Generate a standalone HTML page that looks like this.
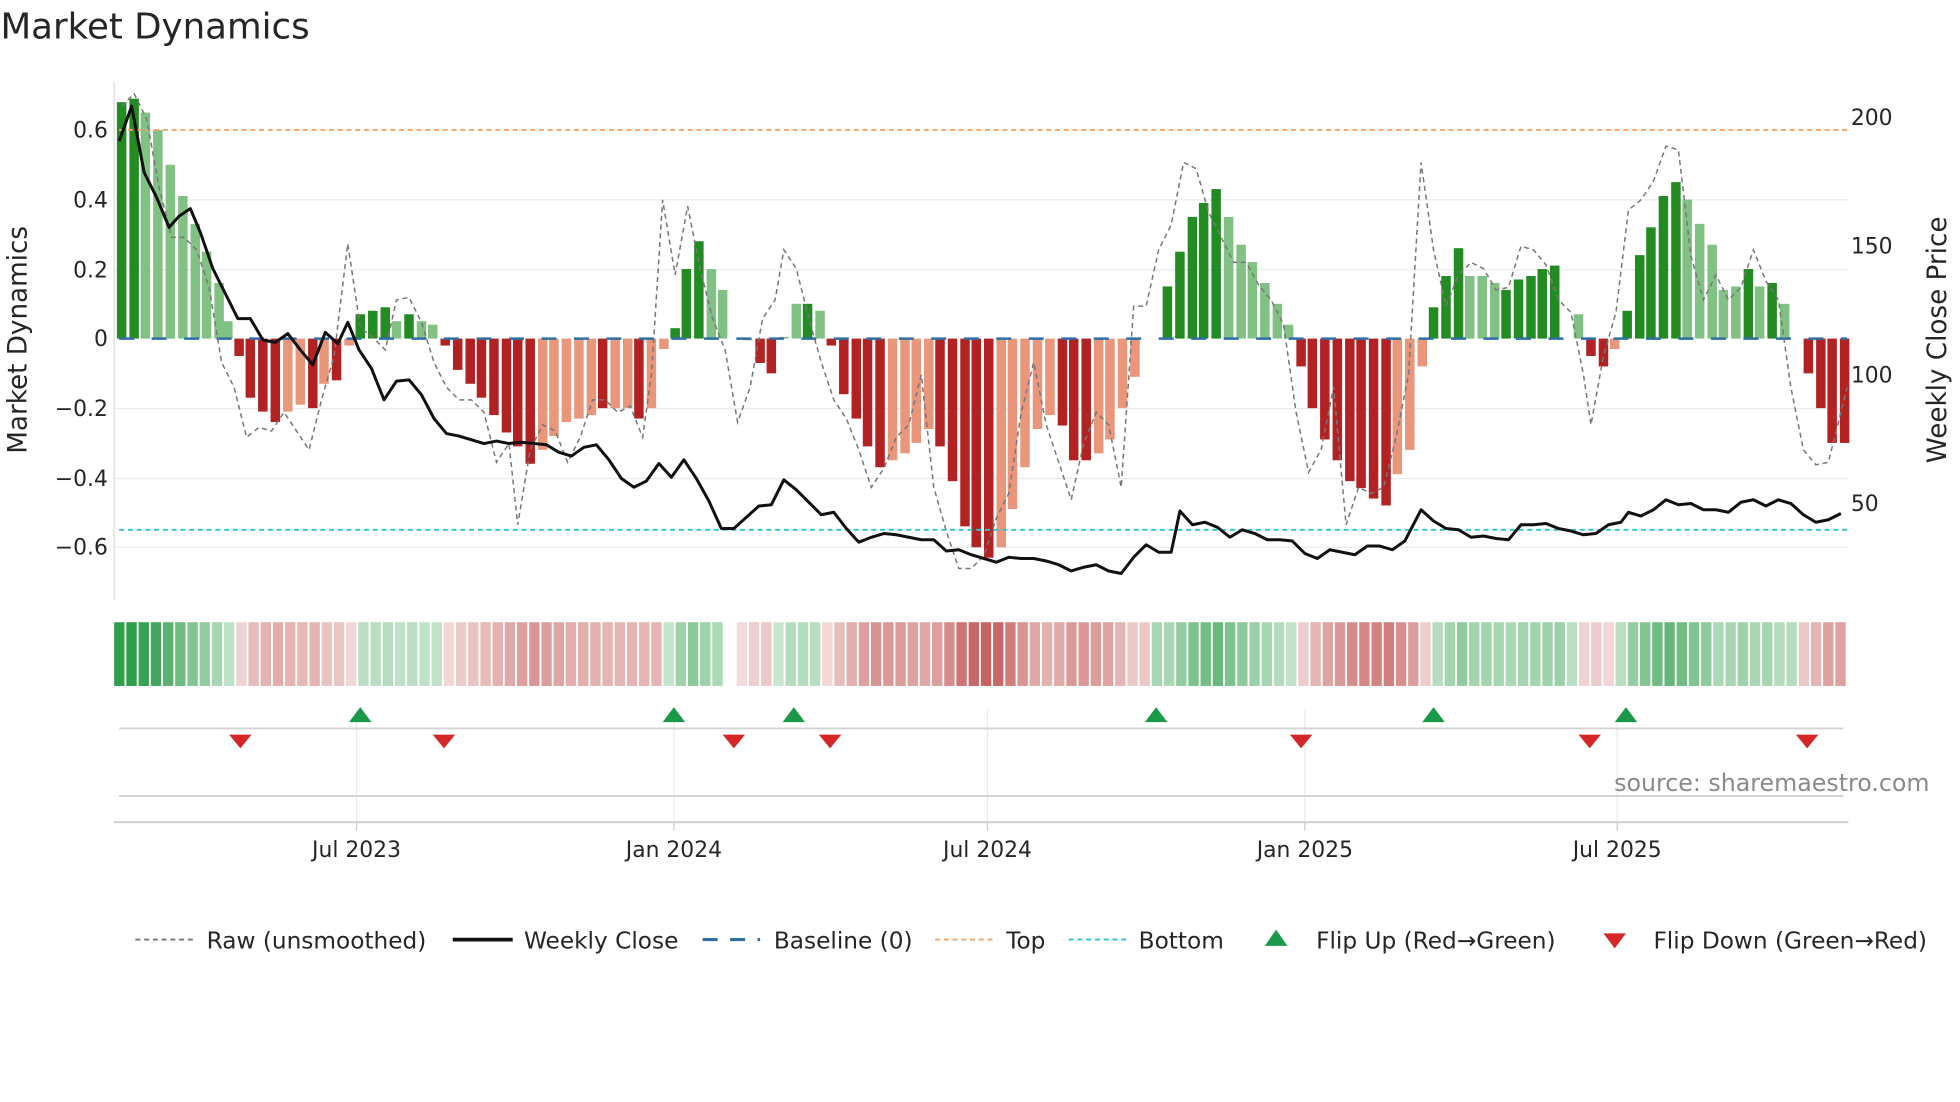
<!DOCTYPE html>
<html><head><meta charset="utf-8"><style>
html,body{margin:0;padding:0;background:#fff;width:1960px;height:1102px;overflow:hidden}
svg{display:block}
text{font-family:"DejaVu Sans","Liberation Sans",sans-serif;fill:#262626}
</style></head><body>
<svg id="c" width="1960" height="1102" viewBox="0 0 1568 882" xmlns="http://www.w3.org/2000/svg">
<text x="0" y="31" font-size="28.5">Market Dynamics</text>
<g stroke="#e8ecef" stroke-width="1">
<line x1="91" x2="1479" y1="160" y2="160"/><line x1="91" x2="1479" y1="216" y2="216"/>
<line x1="91" x2="1479" y1="327" y2="327"/><line x1="91" x2="1479" y1="383" y2="383"/><line x1="91" x2="1479" y1="438" y2="438"/>
<line x1="285" x2="285" y1="568" y2="660"/><line x1="539" x2="539" y1="568" y2="660"/><line x1="790" x2="790" y1="568" y2="660"/><line x1="1044" x2="1044" y1="568" y2="660"/><line x1="1294" x2="1294" y1="568" y2="660"/>
</g>
<line x1="91" x2="91" y1="65" y2="480" stroke="#ddd"/>
<g font-size="17.5" text-anchor="end">
<text x="86" y="110">0.6</text><text x="86" y="166">0.4</text><text x="86" y="222">0.2</text><text x="86" y="277">0</text>
<text x="86" y="333">−0.2</text><text x="86" y="389">−0.4</text><text x="86" y="444">−0.6</text>
</g>
<g font-size="17.5"><text x="1481" y="100">200</text><text x="1481" y="203">150</text><text x="1481" y="306">100</text><text x="1481" y="409">50</text></g>
<text font-size="21" transform="translate(21,272) rotate(-90)" text-anchor="middle">Market Dynamics</text>
<text font-size="21" transform="translate(1557,272) rotate(-90)" text-anchor="middle">Weekly Close Price</text>
<g id="bars"></g>
<g id="heat"></g>
<line x1="95" x2="1478" y1="104" y2="104" stroke="#f4a56a" stroke-width="1.5" stroke-dasharray="4,3"/>
<line x1="95" x2="1478" y1="424" y2="424" stroke="#2ec4cf" stroke-width="1.5" stroke-dasharray="4,3"/>
<line x1="95" x2="1478" y1="271" y2="271" stroke="#2e6fa6" stroke-width="2" stroke-dasharray="12,14"/>
<polyline id="raw" fill="none" stroke="#777" stroke-width="1.2" stroke-dasharray="4,3"/>
<polyline id="close" fill="none" stroke="#111" stroke-width="2.4" stroke-linejoin="round"/>
<line x1="95" x2="1475" y1="583" y2="583" stroke="#d3d3d3" stroke-width="1.5"/>
<line x1="95" x2="1475" y1="637" y2="637" stroke="#d3d3d3" stroke-width="1.5"/>
<line x1="91" x2="1479" y1="658" y2="658" stroke="#ccc" stroke-width="1.5"/>
<g stroke="#ccc"><line x1="285" x2="285" y1="658" y2="665"/><line x1="539" x2="539" y1="658" y2="665"/><line x1="790" x2="790" y1="658" y2="665"/><line x1="1044" x2="1044" y1="658" y2="665"/><line x1="1294" x2="1294" y1="658" y2="665"/></g>
<g id="mk"></g>
<text x="1544" y="633" font-size="19" text-anchor="end" style="fill:#8a8a8a">source: sharemaestro.com</text>
<g font-size="17.5" text-anchor="middle"><text x="285" y="686">Jul 2023</text><text x="539" y="686">Jan 2024</text><text x="790" y="686">Jul 2024</text><text x="1044" y="686">Jan 2025</text><text x="1294" y="686">Jul 2025</text></g>
<g font-size="18.6">
<line x1="108" x2="154" y1="752" y2="752" stroke="#777" stroke-width="1.5" stroke-dasharray="4,3"/><text x="165" y="759">Raw (unsmoothed)</text>
<line x1="362" x2="410" y1="752" y2="752" stroke="#111" stroke-width="3"/><text x="419" y="759">Weekly Close</text>
<line x1="562" x2="608" y1="752" y2="752" stroke="#2e6fa6" stroke-width="2.5" stroke-dasharray="12,10"/><text x="619" y="759">Baseline (0)</text>
<line x1="748" x2="794" y1="752" y2="752" stroke="#f4a56a" stroke-width="1.5" stroke-dasharray="4,3"/><text x="805" y="759">Top</text>
<line x1="855" x2="901" y1="752" y2="752" stroke="#2ec4cf" stroke-width="1.5" stroke-dasharray="4,3"/><text x="911" y="759">Bottom</text>
<polygon points="1012,757 1021,744 1030,757" fill="#1a9a48"/><text x="1053" y="759">Flip Up (Red→Green)</text>
<polygon points="1283,747 1301,747 1292,759" fill="#d62728"/><text x="1323" y="759">Flip Down (Green→Red)</text>
</g>
</svg>
<script>
var NS="http://www.w3.org/2000/svg";
function el(p,t,a){var e=document.createElementNS(NS,t);for(var k in a)e.setAttribute(k,a[k]);p.appendChild(e);return e;}
var B=[[97,.68,1],[107,.69,1],[116,.65,0],[126,.6,0],[136,.5,0],[146,.41,0],[156,.33,0],[165,.25,0],[175,.16,0],[182,.05,0],[191,-.05,1],[200,-.17,1],[210,-.21,1],[220,-.24,1],[230,-.21,0],[240,-.19,0],[250,-.2,1],[259,-.13,0],[269,-.12,1],[279,-.02,0],
[288,.07,1],[298,.08,1],[308,.09,1],[317,.05,0],[327,.07,1],[337,.05,0],[346,.04,0],
[356,-.02,1],[366,-.09,1],[376,-.13,1],[385,-.17,1],[395,-.22,1],[405,-.27,1],[414,-.31,1],[424,-.36,1],[434,-.32,0],[443,-.28,0],[453,-.24,0],[463,-.23,0],[473,-.22,0],[482,-.2,1],[492,-.2,0],[502,-.2,0],[511,-.23,1],[521,-.2,0],[531,-.03,0],
[540,.03,1],[549,.2,1],[559,.28,1],[569,.2,0],[578,.14,0],[598,-.005,0],[608,-.07,1],[617,-.1,1],[627,.005,0],[637,.1,0],[646,.1,1],[656,.08,0],
[665,-.02,1],[675,-.16,1],[685,-.23,1],[694,-.31,1],[704,-.37,1],[714,-.35,0],[724,-.33,0],[733,-.3,0],[743,-.26,0],[752,-.31,1],[762,-.41,1],[772,-.54,1],[781,-.6,1],[791,-.63,1],[801,-.6,0],[810,-.49,0],[820,-.37,0],[830,-.26,0],[840,-.22,0],[850,-.25,1],[859,-.35,1],[869,-.35,1],[879,-.33,0],[888,-.29,0],[898,-.2,0],[908,-.11,0],
[934,.15,1],[944,.25,1],[954,.35,1],[963,.39,1],[973,.43,1],[983,.35,0],[993,.27,0],[1002,.22,0],[1012,.16,0],[1022,.1,0],[1031,.04,0],
[1041,-.08,1],[1050,-.2,1],[1060,-.29,1],[1070,-.35,1],[1080,-.41,1],[1089,-.43,1],[1099,-.46,1],[1109,-.48,1],[1118,-.39,0],[1128,-.32,0],[1138,-.08,0],
[1147,.09,1],[1157,.18,1],[1167,.26,1],[1176,.18,0],[1186,.18,0],[1196,.16,0],[1205,.14,1],[1215,.17,1],[1225,.18,1],[1234,.2,1],[1244,.21,1],[1263,.07,0],
[1273,-.05,1],[1283,-.08,1],[1292,-.03,0],
[1302,.08,1],[1312,.24,1],[1321,.32,1],[1331,.41,1],[1341,.45,1],[1350,.4,0],[1360,.33,0],[1370,.27,0],[1379,.14,0],[1389,.15,0],[1399,.2,1],[1408,.15,0],[1418,.16,1],[1428,.1,0],
[1447,-.1,1],[1457,-.2,1],[1466,-.3,1],[1476,-.3,1]];
var g=document.getElementById("bars"),Z=271,K=278.3;
B.forEach(function(b){var v=b[1],h=Math.abs(v)*K,y=v>0?Z-h:Z;
var c=v>0?(b[2]?"#228b22":"#81c184"):(b[2]?"#b22222":"#e9967a");
el(g,"rect",{x:b[0]-3.8,y:y,width:7.6,height:h,fill:c});});
var hg=document.getElementById("heat");
function mix(a,t){return "rgb("+a.map(function(c){return Math.round(255+(c-255)*t)}).join(",")+")";}
for(var i=0;i<142;i++){var x=91+i*9.77,cx=x+4.9,best=null,d=1e9;
B.forEach(function(b){var dd=Math.abs(b[0]-cx);if(dd<d){d=dd;best=b;}});
if(cx>584&&cx<594)continue;
var v=best[1],col;
if(v>=0)col=mix([46,158,74],0.25+0.75*Math.min(v/0.69,1));else col=mix([192,80,77],0.2+0.7*Math.min(-v/0.63,1));
el(hg,"rect",{x:x,y:498,width:8.3,height:51,fill:col});}
var R=[[97,85],[107,75],[117,95],[127,150],[137,190],[147,190],[157,200],[167,230],[177,290],[187,310],[197,350],[207,342],[217,345],[227,330],[237,345],[247,360],[257,320],[267,285],[278,195],[288,262],[298,270],[308,280],[317,240],[327,238],[337,258],[347,290],[357,310],[367,320],[377,320],[387,330],[397,370],[407,355],[414,420],[424,360],[434,340],[444,345],[454,370],[464,350],[474,320],[484,320],[494,330],[504,325],[514,350],[521,300],[530,160],[540,220],[550,165],[560,215],[570,255],[580,280],[590,338],[600,310],[610,255],[620,240],[627,200],[637,215],[647,255],[657,290],[667,320],[677,335],[687,360],[697,390],[707,375],[717,350],[727,340],[737,300],[747,390],[757,425],[767,455],[777,455],[787,445],[797,415],[807,395],[817,330],[827,290],[837,340],[847,370],[857,400],[867,355],[877,330],[887,340],[897,390],[907,245],[917,245],[927,200],[937,180],[947,130],[957,135],[967,170],[977,190],[987,210],[997,210],[1007,228],[1017,240],[1027,260],[1037,330],[1047,378],[1057,360],[1067,310],[1077,420],[1087,390],[1097,395],[1107,390],[1117,350],[1127,300],[1137,130],[1147,200],[1157,245],[1167,220],[1177,210],[1187,215],[1197,232],[1207,230],[1217,197],[1227,200],[1237,212],[1247,240],[1257,250],[1267,300],[1273,340],[1283,285],[1293,250],[1303,168],[1313,160],[1323,145],[1333,117],[1343,120],[1353,205],[1363,240],[1373,220],[1383,240],[1393,230],[1403,200],[1413,225],[1423,240],[1433,310],[1443,360],[1453,372],[1463,370],[1473,330],[1478,310]];
document.getElementById("raw").setAttribute("points",R.join(" "));
var C=[[95,113],[105,85],[115,138],[125,158],[135,182],[143,173],[152,167],[160,186],[170,215],[180,235],[190,255],[200,255],[210,272],[220,274],[230,267],[240,280],[250,292],[260,266],[270,275],[278,258],[287,280],[297,295],[307,320],[317,305],[327,304],[337,316],[347,335],[357,347],[367,349],[377,352],[387,355],[397,353],[407,355],[417,354],[427,355],[437,356],[447,362],[457,365],[467,358],[477,356],[487,368],[497,383],[507,390],[517,385],[527,371],[537,382],[547,368],[557,383],[567,401],[577,423],[587,423],[597,414],[607,405],[617,404],[627,384],[637,392],[647,402],[657,412],[667,410],[677,423],[687,434],[697,430],[707,427],[717,428],[727,430],[737,432],[747,432],[757,441],[767,440],[777,444],[787,447],[797,450],[807,446],[817,447],[827,447],[837,449],[847,452],[857,457],[867,454],[877,452],[887,457],[897,459],[907,446],[917,436],[927,442],[937,442],[944,409],[954,420],[964,418],[974,422],[984,430],[994,424],[1004,427],[1014,432],[1024,432],[1034,433],[1044,443],[1054,447],[1064,440],[1074,442],[1084,444],[1094,437],[1104,437],[1114,440],[1124,433],[1137,408],[1147,417],[1157,423],[1167,424],[1177,430],[1187,429],[1197,431],[1207,432],[1217,420],[1227,420],[1237,419],[1247,423],[1257,425],[1267,428],[1277,427],[1287,420],[1297,418],[1303,410],[1313,413],[1323,408],[1333,400],[1343,404],[1353,403],[1363,408],[1373,408],[1383,410],[1393,402],[1403,400],[1413,405],[1423,400],[1433,403],[1443,412],[1453,418],[1463,416],[1473,411]];
document.getElementById("close").setAttribute("points",C.join(" "));
var mk=document.getElementById("mk");
[288,539,635,925,1147,1301].forEach(function(x){el(mk,"polygon",{points:(x-9)+",578 "+x+",566 "+(x+9)+",578",fill:"#1a9a48"});});
[192,355,587,664,1041,1272,1446].forEach(function(x){el(mk,"polygon",{points:(x-9)+",588 "+(x+9)+",588 "+x+",599",fill:"#d62728"});});
</script>
</body></html>
